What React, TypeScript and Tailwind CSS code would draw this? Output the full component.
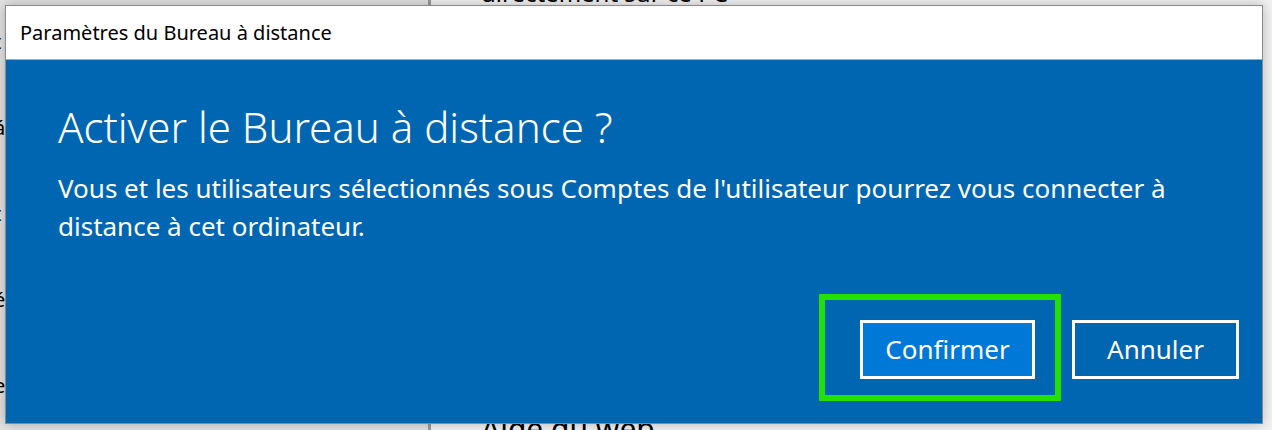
const font = { fontFamily: '"Noto Sans", "Open Sans", sans-serif' };

function Background() {
  return (
    <div className="flex h-full w-full">
      <div className="relative flex h-full w-[431px] flex-col overflow-hidden border-r-[3px] border-[#9a9a9a] bg-[#e2e2e2]">
        <div className="-ml-[6px] flex flex-col gap-[62px] pt-[30px] text-[20px] leading-[24px] text-black">
          <span>t</span>
          <span>á</span>
          <span>t</span>
          <span>é</span>
          <span>e</span>
        </div>
      </div>
      <div className="flex h-full flex-1 flex-col justify-between bg-[#f2f2f2] pl-[50px]">
        <div className="-mt-[21px] text-[24px] leading-[28px] text-black">directement sur ce PC</div>
        <div className="-mb-[16px] text-[30px] leading-[34px] text-black">Aide du web</div>
      </div>
    </div>
  );
}

function Dialog() {
  return (
    <div className="flex h-[419px] w-[1258px] flex-col border border-[#8a8a8a] shadow-[0_0_12px_rgba(0,0,0,0.25)]">
      <div className="flex h-[54px] items-center border-b border-[#84b4dc] bg-white pl-[14px] text-[20px] text-black">
        Paramètres du Bureau à distance
      </div>
      <div className="flex flex-1 flex-col bg-[#0066b2] px-[52px] text-white">
        <h1 className="pt-[41px] text-[42px] font-light leading-[52px]">Activer le Bureau à distance ?</h1>
        <p className="mt-[16px] text-[26px] leading-[38px]">
          Vous et les utilisateurs sélectionnés sous Comptes de l'utilisateur pourrez vous connecter à<br />
          distance à cet ordinateur.
        </p>
        <div className="mt-auto mb-[44px] flex justify-end gap-[37px]">
          <div className="relative">
            <button className="flex h-[59px] w-[175px] items-center justify-center border-[3px] border-white bg-[#0078d7] text-[26px] text-white">
              Confirmer
            </button>
            <div className="pointer-events-none absolute -left-[41px] -top-[26px] h-[107px] w-[242px] border-[6px] border-[#22e000]" />
          </div>
          <button className="-mr-[29px] flex h-[59px] w-[167px] items-center justify-center border-[3px] border-white text-[26px] text-white">
            Annuler
          </button>
        </div>
      </div>
    </div>
  );
}

export default function App() {
  return (
    <div className="relative h-[430px] w-[1272px] overflow-hidden" style={font}>
      <Background />
      <div className="absolute left-[5px] top-[5px]">
        <Dialog />
      </div>
    </div>
  );
}
